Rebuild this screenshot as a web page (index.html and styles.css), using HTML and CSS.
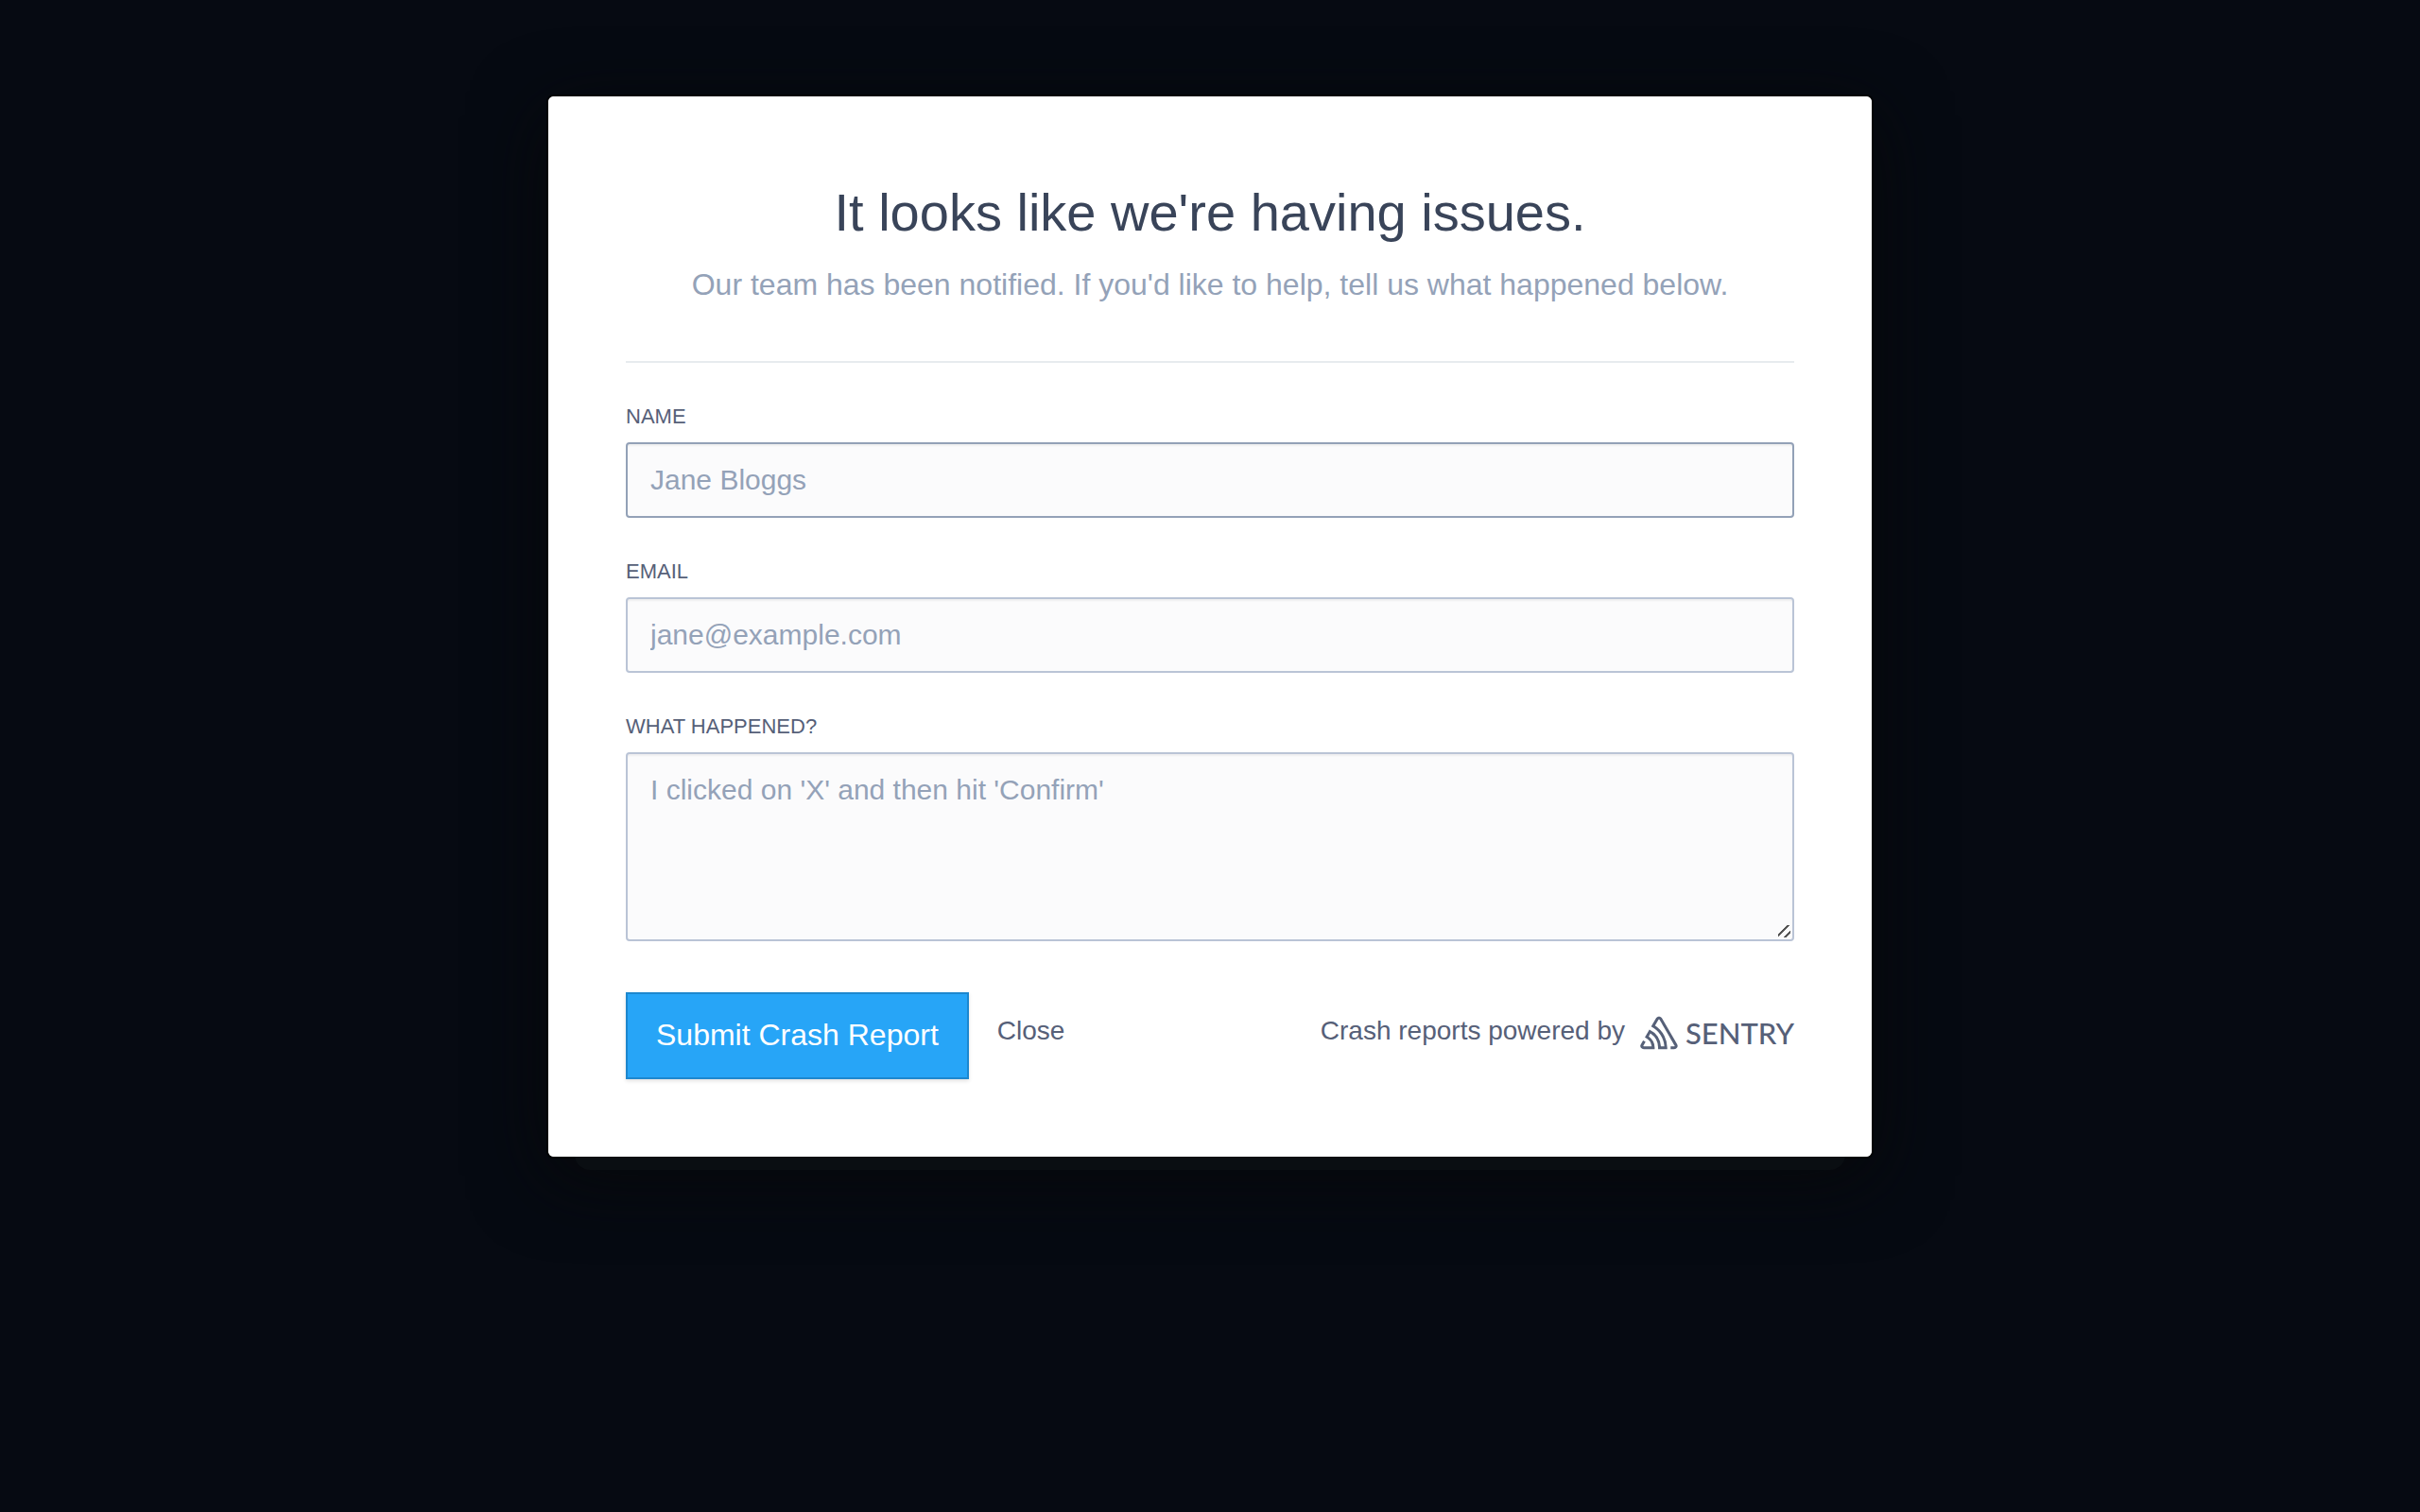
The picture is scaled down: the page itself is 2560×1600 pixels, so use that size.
FILE: index.html
```html
<!DOCTYPE html>
<html lang="en">
<head>
    <meta charset="UTF-8">
    <meta name="viewport" content="width=device-width, initial-scale=1.0">
    <title>Crash Report</title>
    <link rel="stylesheet" href="styles.css">
</head>
<body>
    <div class="modal">
        <header>
            <h1>It looks like we're having issues.</h1>
            <p>Our team has been notified. If you'd like to help, tell us what happened below.</p>
        </header>
        <form id="crashForm">
            <div class="field">
                <label for="name">Name</label>
                <input type="text" id="name" name="name" placeholder="Jane Bloggs" autofocus>
            </div>
            <div class="field">
                <label for="email">Email</label>
                <input type="email" id="email" name="email" placeholder="jane@example.com">
            </div>
            <div class="field">
                <label for="comments">What happened?</label>
                <textarea id="comments" name="comments" placeholder="I clicked on 'X' and then hit 'Confirm'"></textarea>
            </div>
            <div class="form-footer">
                <button type="submit" class="submit-button">Submit Crash Report</button>
                <button type="button" class="close-button">Close</button>
                <p class="powered-by">
                    <span>Crash reports powered by</span>
                    <a href="#" class="sentry-link">
                        <svg class="sentry-icon" viewBox="0 1 24 22" aria-hidden="true">
                            <path d="M13.91 2.505c-.873-1.448-2.972-1.448-3.844 0L6.904 7.92a15.478 15.478 0 0 1 8.53 12.811h-2.221A13.301 13.301 0 0 0 5.784 9.814l-2.926 5.06a7.65 7.65 0 0 1 4.435 5.848H2.194a.365.365 0 0 1-.298-.534l1.413-2.402a5.16 5.16 0 0 0-1.614-.913L.296 19.275a2.182 2.182 0 0 0 .812 2.999 2.24 2.24 0 0 0 1.086.288h6.983a9.322 9.322 0 0 0-3.845-8.318l1.11-1.922a11.47 11.47 0 0 1 4.95 10.24h5.915a17.242 17.242 0 0 0-7.885-15.28l2.244-3.845a.37.37 0 0 1 .504-.13c.255.14 9.75 16.708 9.928 16.9a.365.365 0 0 1-.327.543h-2.287c.029.612.029 1.223 0 1.831h2.297a2.206 2.206 0 0 0 1.922-3.31z"/>
                        </svg>
                        <span class="sentry-name">SENTRY</span>
                    </a>
                </p>
            </div>
        </form>
    </div>
</body>
</html>
```
FILE: styles.css
```css
* {
    box-sizing: border-box;
}
body {
    margin: 0;
    padding: 102px 40px;
    min-height: 100vh;
    font-family: "Liberation Sans", Arial, sans-serif;
    font-size: 28px;
    color: #566078;
    background-color: #060a12;
}
.modal {
    position: relative;
    z-index: 0;
    max-width: 1400px;
    margin: 0 auto;
    padding: 82px;
    background-color: #fff;
    border-radius: 6px;
    box-shadow: 0 0 0 2px #020305, 0 20px 80px #07080a;
}
/* second sheet peeking out under the dialog */
.modal::before {
    content: "";
    position: absolute;
    z-index: -2;
    left: 28px;
    right: 28px;
    bottom: -14px;
    height: 60px;
    border-radius: 16px;
    background-color: #0a0e12;
}
.modal::after {
    content: "";
    position: absolute;
    z-index: -1;
    inset: 0;
    border-radius: 6px;
    background-color: #fff;
}
header {
    padding-bottom: 60px;
    margin-bottom: 40px;
    border-bottom: 2px solid #e7ebee;
    text-align: center;
}
h1 {
    margin: 0 0 14px;
    font-size: 56px;
    font-weight: normal;
    line-height: 82px;
    color: #394459;
}
header p {
    margin: 0;
    font-size: 32px;
    line-height: 42px;
    color: #94a2b8;
}
.field {
    margin-bottom: 40px;
}
.field label {
    display: block;
    margin-bottom: 10px;
    font-size: 22px;
    line-height: 34px;
    text-transform: uppercase;
}
.field input, .field textarea {
    display: block;
    width: 100%;
    padding: 21px 24px;
    border: 2px solid #bac4d6;
    border-radius: 4px;
    background-color: #fbfbfc;
    box-shadow: inset 0 2px 2px rgba(0, 0, 0, 0.05);
    color: #394459;
    font-family: inherit;
    font-size: 30px;
    line-height: 34px;
    outline: none;
}
.field input {
    height: 80px;
}
.field textarea {
    height: 200px;
    resize: vertical;
}
.field textarea::-webkit-resizer {
    background: linear-gradient(135deg, transparent 7px, #555 7px, #555 9px, transparent 9px, transparent 13px, #555 13px, #555 15px, transparent 15px) no-repeat 0 0 / 13px 13px;
}
.field input:focus, .field textarea:focus {
    border-color: #93a1b7;
}
.field ::placeholder {
    color: #94a2b8;
    opacity: 1;
}
.form-footer {
    display: flex;
    align-items: flex-start;
    margin-top: 54px;
    line-height: 82px;
}
button {
    font-family: inherit;
    cursor: pointer;
}
.submit-button {
    height: 92px;
    padding: 0 30px 2px;
    border: 2px solid #1d87ce;
    background-color: #27a5f7;
    box-shadow: 0 2px 4px rgba(0, 0, 0, 0.12);
    color: #fff;
    font-size: 32px;
}
.close-button {
    margin-left: 30px;
    padding: 0;
    border: none;
    background: none;
    color: inherit;
    font-size: 28px;
    line-height: inherit;
}
.powered-by {
    display: flex;
    gap: 16px;
    margin: 0 0 0 auto;
}
.sentry-link {
    display: flex;
    align-items: center;
    gap: 8px;
    padding-top: 2px;
    color: inherit;
    text-decoration: none;
}
.sentry-icon {
    width: 40px;
    height: 36px;
    fill: currentColor;
}
.sentry-name {
    font-family: Lato, sans-serif;
    font-size: 31px;
    font-weight: 500;
}
```
